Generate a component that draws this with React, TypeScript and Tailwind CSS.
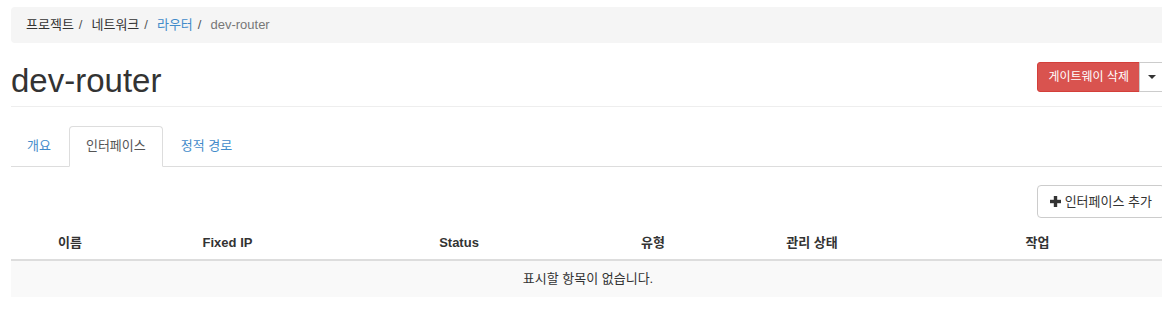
const columns = [
  { label: "이름", w: "w-[118px]" },
  { label: "Fixed IP", w: "w-[197px]" },
  { label: "Status", w: "w-[266px]" },
  { label: "유형", w: "w-[122px]" },
  { label: "관리 상태", w: "w-[196px]" },
  { label: "작업", w: "flex-1" },
];

function Sep() {
  return <span className="ml-[5px] mr-[9px] text-[#555]">/</span>;
}

export default function App() {
  return (
    <div
      className="w-[1162px] h-[330px] overflow-hidden bg-white text-[13px] text-[#333]"
      style={{ fontFamily: '"Liberation Sans", "Noto Sans CJK KR", sans-serif' }}
    >
      <div className="ml-[11px] w-[1154px]">
        {/* breadcrumb */}
        <div className="mt-[7px] h-[36px] bg-[#f5f5f5] rounded-[4px] px-[15px] flex items-center leading-[18px]">
          <span className="text-[#333]">프로젝트</span>
          <Sep />
          <span className="text-[#333]">네트워크</span>
          <Sep />
          <span className="text-[#428bca]">라우터</span>
          <Sep />
          <span className="text-[#777]">dev-router</span>
        </div>

        {/* page header */}
        <div className="flex justify-between items-start pt-[18px] pb-[5px] border-b border-[#eee]">
          <h1 className="text-[33px] leading-[40px] text-[#333] font-normal">dev-router</h1>
          <div className="flex mt-[1px]">
            <button className="h-[30px] px-[10px] text-[12px] leading-[18px] text-white bg-[#d9534f] border border-[#d43f3a] rounded-l-[3px]">
              게이트웨이 삭제
            </button>
            <button className="h-[30px] w-[26px] -ml-px flex items-center justify-center bg-white border border-[#ccc] rounded-r-[3px]">
              <span className="w-0 h-0 border-l-[4px] border-r-[4px] border-t-[4px] border-l-transparent border-r-transparent border-t-[#333]" />
            </button>
          </div>
        </div>

        {/* tabs */}
        <div className="mt-[19px] flex border-b border-[#ddd]">
          <div className="px-[15px] py-[10px] leading-[18px] mr-[2px] border border-transparent text-[#428bca]">개요</div>
          <div className="px-[16px] py-[10px] leading-[18px] mr-[2px] border border-[#ddd] border-b-transparent rounded-t-[4px] bg-white -mb-px text-[#555]">
            인터페이스
          </div>
          <div className="px-[15px] py-[10px] leading-[18px] mr-[2px] border border-transparent text-[#428bca]">정적 경로</div>
        </div>

        {/* table actions */}
        <div className="mt-[18px] flex justify-end">
          <button className="h-[33px] px-[12px] flex items-center gap-[4px] bg-white border border-[#ccc] rounded-[4px] text-[#333] leading-[19px]">
            <svg width="11" height="11" viewBox="0 0 11 11">
              <rect x="3.8" y="0" width="3.4" height="11" fill="#333" />
              <rect x="0" y="3.8" width="11" height="3.4" fill="#333" />
            </svg>
            인터페이스 추가
          </button>
        </div>

        {/* table */}
        <div className="mt-[8px]">
          <div className="flex h-[35px] items-center font-bold border-b-2 border-[#ddd]">
            {columns.map((c) => (
              <div key={c.label} className={`${c.w} text-center`}>
                {c.label}
              </div>
            ))}
          </div>
          <div className="h-[36px] bg-[#f9f9f9] flex items-center justify-center text-[#333]">
            표시할 항목이 없습니다.
          </div>
        </div>
      </div>
    </div>
  );
}
